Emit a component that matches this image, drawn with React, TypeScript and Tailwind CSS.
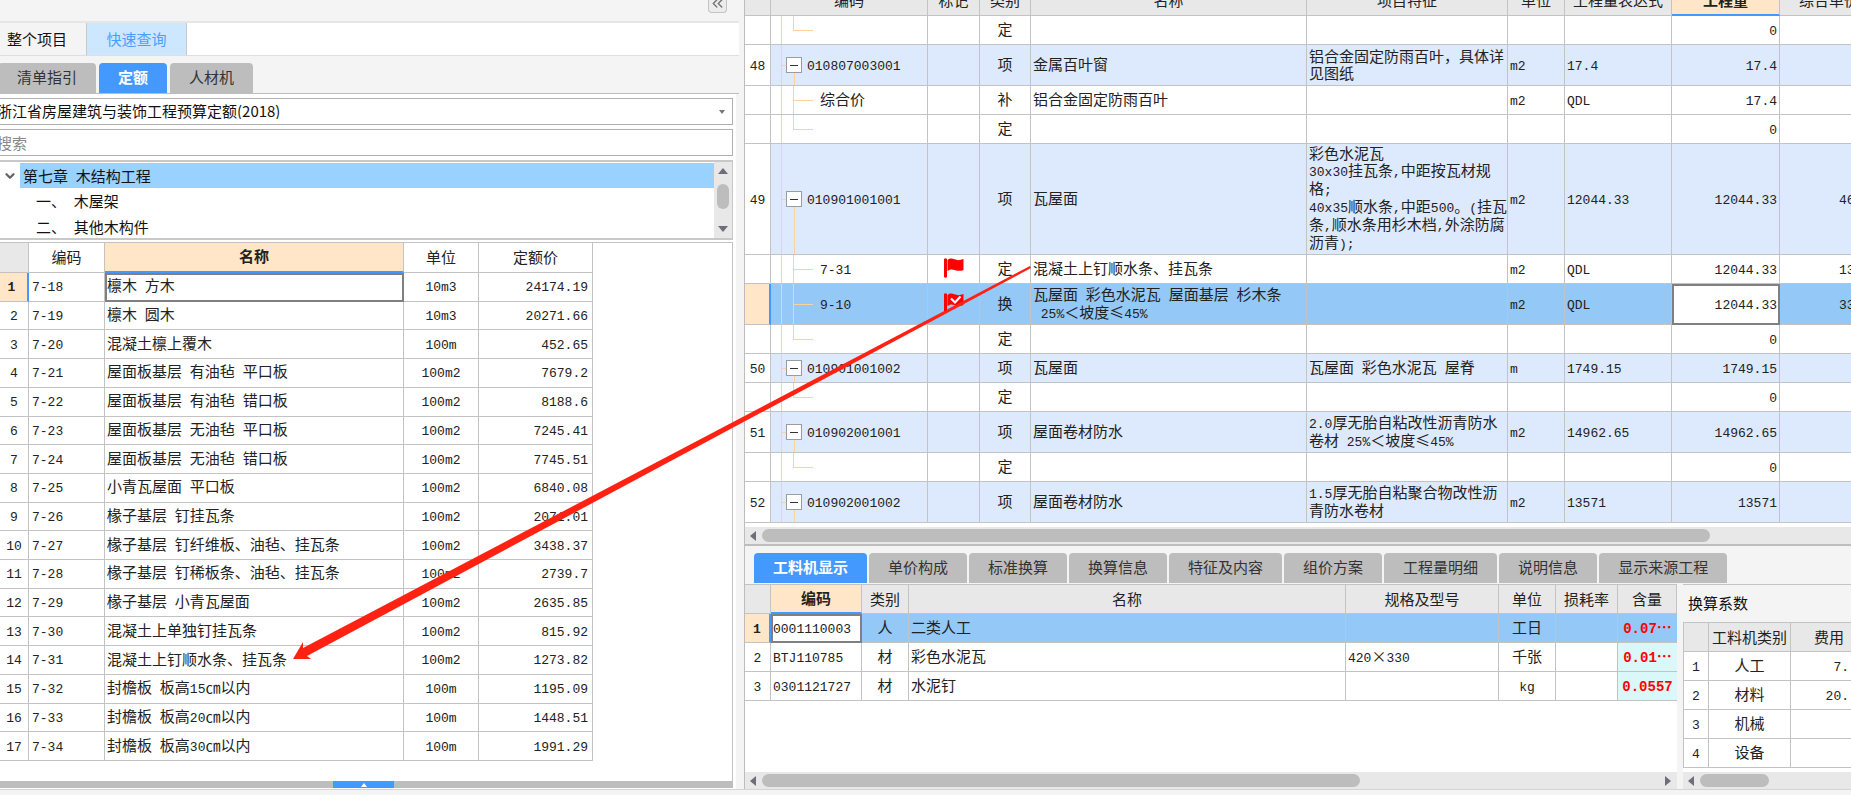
import type { ReactNode } from 'react';
import { ChevronDown, ChevronsLeft } from 'lucide-react';

const quotas = [
  ['7-18', '檩木 方木', '10m3', '24174.19'],
  ['7-19', '檩木 圆木', '10m3', '20271.66'],
  ['7-20', '混凝土檩上覆木', '100m', '452.65'],
  ['7-21', '屋面板基层 有油毡 平口板', '100m2', '7679.2'],
  ['7-22', '屋面板基层 有油毡 错口板', '100m2', '8188.6'],
  ['7-23', '屋面板基层 无油毡 平口板', '100m2', '7245.41'],
  ['7-24', '屋面板基层 无油毡 错口板', '100m2', '7745.51'],
  ['7-25', '小青瓦屋面 平口板', '100m2', '6840.08'],
  ['7-26', '椽子基层 钉挂瓦条', '100m2', '2071.01'],
  ['7-27', '椽子基层 钉纤维板、油毡、挂瓦条', '100m2', '3438.37'],
  ['7-28', '椽子基层 钉稀板条、油毡、挂瓦条', '100m2', '2739.7'],
  ['7-29', '椽子基层 小青瓦屋面', '100m2', '2635.85'],
  ['7-30', '混凝土上单独钉挂瓦条', '100m2', '815.92'],
  ['7-31', '混凝土上钉顺水条、挂瓦条', '100m2', '1273.82'],
  ['7-32', '封檐板 板高15㎝以内', '100m', '1195.09'],
  ['7-33', '封檐板 板高20㎝以内', '100m', '1448.51'],
  ['7-34', '封檐板 板高30㎝以内', '100m', '1991.29'],
];

type Bill = {
  no?: string;
  code?: string;
  kind: string;
  name?: string;
  desc?: string;
  unit?: string;
  expr?: string;
  qty: string;
  price?: string;
  flag?: 'plain' | 'checked';
  size?: 'mid' | 'tall';
  selected?: boolean;
  last?: boolean;
};

const bills: Bill[] = [
  { kind: '定', qty: '0', last: true },
  { no: '48', code: '010807003001', kind: '项', name: '金属百叶窗', desc: '铝合金固定防雨百叶，具体详\n见图纸', unit: 'm2', expr: '17.4', qty: '17.4', size: 'mid' },
  { code: '综合价', kind: '补', name: '铝合金固定防雨百叶', unit: 'm2', expr: 'QDL', qty: '17.4' },
  { kind: '定', qty: '0', last: true },
  {
    no: '49', code: '010901001001', kind: '项', name: '瓦屋面', unit: 'm2', expr: '12044.33', qty: '12044.33', price: '46', size: 'tall',
    desc: '彩色水泥瓦\n30x30挂瓦条,中距按瓦材规\n格;\n40x35顺水条,中距500。(挂瓦\n条,顺水条用杉木档,外涂防腐\n沥青);',
  },
  { code: '7-31', kind: '定', name: '混凝土上钉顺水条、挂瓦条', unit: 'm2', expr: 'QDL', qty: '12044.33', price: '13', flag: 'plain' },
  { code: '9-10', kind: '换', name: '瓦屋面 彩色水泥瓦 屋面基层 杉木条\n 25%＜坡度≤45%', unit: 'm2', expr: 'QDL', qty: '12044.33', price: '33', flag: 'checked', size: 'mid', selected: true },
  { kind: '定', qty: '0', last: true },
  { no: '50', code: '010901001002', kind: '项', name: '瓦屋面', desc: '瓦屋面 彩色水泥瓦 屋脊', unit: 'm', expr: '1749.15', qty: '1749.15' },
  { kind: '定', qty: '0', last: true },
  { no: '51', code: '010902001001', kind: '项', name: '屋面卷材防水', desc: '2.0厚无胎自粘改性沥青防水\n卷材 25%＜坡度≤45%', unit: 'm2', expr: '14962.65', qty: '14962.65', size: 'mid' },
  { kind: '定', qty: '0', last: true },
  { no: '52', code: '010902001002', kind: '项', name: '屋面卷材防水', desc: '1.5厚无胎自粘聚合物改性沥\n青防水卷材', unit: 'm2', expr: '13571', qty: '13571', size: 'mid' },
];

const detailTabs = ['工料机显示', '单价构成', '标准换算', '换算信息', '特征及内容', '组价方案', '工程量明细', '说明信息', '显示来源工程'];

const resources = [
  ['0001110003', '人', '二类人工', '', '工日', '0.07…'],
  ['BTJ110785', '材', '彩色水泥瓦', '420×330', '千张', '0.01…'],
  ['0301121727', '材', '水泥钉', '', 'kg', '0.0557'],
];

const factors = [
  ['人工', '7.'],
  ['材料', '20.'],
  ['机械', ''],
  ['设备', ''],
];

const line = 'border-[#c3c3c3]';
const cell = `border-r border-b ${line} px-[2px] font-normal whitespace-pre`;
const rowHeight = { short: 'h-[29px]', mid: 'h-[41px]', tall: 'h-[111px]' };

// Latin runs are set in a narrower monospace next to the CJK glyphs
function Txt({ children = '', big }: { children?: string; big?: boolean }) {
  return children.split(/([\x20-\x7e]+)/).map((part, i) =>
    i % 2 ? (
      <span key={i} className={`font-['Liberation_Mono',monospace] leading-none ${big ? 'text-sm' : 'text-[13px]'}`}>
        {part}
      </span>
    ) : (
      part
    ),
  );
}

function Cols({ widths }: { widths: string[] }) {
  return (
    <colgroup>
      {widths.map((w, i) => (
        <col key={i} className={w} />
      ))}
    </colgroup>
  );
}

function Arrow({ dir }: { dir: 'up' | 'down' | 'left' | 'right' }) {
  const points = { up: '0,6 5,0 10,6', down: '0,0 10,0 5,6', left: '6,0 6,10 0,5', right: '0,0 6,5 0,10' }[dir];
  const vertical = dir === 'up' || dir === 'down';
  return (
    <svg width={vertical ? 10 : 6} height={vertical ? 6 : 10} className="shrink-0" aria-hidden="true">
      <polygon points={points} fill="#6f6f78" />
    </svg>
  );
}

function HScroll({ thumb, end }: { thumb: string; end?: boolean }) {
  return (
    <div className="flex h-[17px] shrink-0 items-center bg-[#e8e8e8] pr-[6px] pl-[5px]">
      <Arrow dir="left" />
      <div className="flex min-w-0 flex-1 px-[6px]">
        <div className={`h-[13px] rounded-full bg-[#bdbdbd] ${thumb}`} />
      </div>
      {end && <Arrow dir="right" />}
    </div>
  );
}

function Tab({ active, children }: { active?: boolean; children: ReactNode }) {
  return (
    <button
      role="tab"
      aria-selected={!!active}
      className={`h-[30px] shrink-0 rounded-t-sm px-[19px] pb-[3px] text-[15px] leading-[17px] ${active ? 'bg-[#4499ff] font-bold text-white' : 'bg-[#bdbdbd] text-[#333]'}`}>
      {children}
    </button>
  );
}

function Flag({ checked }: { checked?: boolean }) {
  return (
    <svg width="20" height="22" viewBox="0 0 20 22" className="mx-auto block">
      <path d="M0 2q1.500-1.500 3 0v18q-1.500 1.500-3 0z" fill="#f00" />
      <path d="M3.500 3C6 1 8 1.200 10.500 2.300S16 3.500 19.500 2V13c-3 1.300-6 1-9 0s-5-.5-7 1z" fill="#f00" />
      {checked && <path d="M7 6.500l4 4 5.500-6" fill="none" stroke="#fff" strokeWidth="2.200" />}
    </svg>
  );
}

function TreeCell({ row }: { row: Bill }) {
  const tree = 'border-[#fbd29b]';
  return (
    <div className="flex h-full items-center">
      <div className={`w-[11px] shrink-0 self-stretch border-r ${tree}`} />
      {row.no ? (
        <>
          <div className={`w-1 border-t ${tree}`} />
          <div className="flex w-4 flex-col items-center self-stretch">
            <div className="flex-1" />
            <button
              aria-label="折叠"
              className="flex h-4 w-4 items-center justify-center border border-[#9c9c9c] bg-white">
              <span className="h-px w-2 bg-[#333]" />
            </button>
            <div className={`w-0 flex-1 border-l ${tree}`} />
          </div>
          <span className="pb-[3px] pl-[5px]">
            <Txt>{row.code}</Txt>
          </span>
        </>
      ) : (
        <>
          <div className="ml-[11px] flex w-5 flex-col self-stretch">
            <div className={`flex-1 border-b border-l ${tree}`} />
            <div className={`flex-1 ${row.last ? '' : `border-l ${tree}`}`} />
          </div>
          <span className="pb-[3px] pl-[7px]">
            <Txt>{row.code}</Txt>
          </span>
        </>
      )}
    </div>
  );
}

function QuotaPanel() {
  return (
    <section className="flex w-[745px] shrink-0 flex-col border-r border-[#bdbdbd] bg-[#f4f4f4] pr-[5px]">
      <div className="flex h-[23px] shrink-0 items-start justify-end border-b-2 border-[#e6e6e6] pr-3">
        <button aria-label="收起" className="flex h-[13px] w-[19px] items-center justify-center overflow-hidden rounded-b border border-t-0 border-[#c3c3c3] bg-[#ececec] pb-[5px] text-[#777]">
          <ChevronsLeft size={17} className="shrink-0" />
        </button>
      </div>
      <div role="tablist" className="flex h-[33px] shrink-0 border-b border-[#dedede] bg-white">
        <button role="tab" className="w-[87px] border-r border-[#c8c8c8] bg-[#f4f4f4] pr-3 pb-[2px]">
          整个项目
        </button>
        <button role="tab" aria-selected className="w-[100px] border-r border-[#c8c8c8] bg-[#cce7ff] pb-[2px] text-[#4b9eff]">
          快速查询
        </button>
      </div>
      <div className="shrink-0 border-b border-[#bdbdbd] pt-[7px]">
        <div role="tablist" className="-ml-[2px] flex gap-[3px]">
          <Tab>清单指引</Tab>
          <Tab active>定额</Tab>
          <Tab>人材机</Tab>
        </div>
      </div>
      <div className="mr-[3px] flex flex-1 flex-col bg-white pt-1 pr-[3px]">
        <div className="-ml-1 flex flex-col gap-1">
          <div className="grid items-center">
            <select aria-label="定额库" className="col-start-1 row-start-1 h-[27px] w-full appearance-none border border-[#b0b0b0] bg-white pb-[2px] text-[15px]">
              <option>浙江省房屋建筑与装饰工程预算定额(2018)</option>
            </select>
            <svg width="6" height="4" className="col-start-1 row-start-1 mr-2 justify-self-end">
              <polygon points="0,0 6,0 3,4" fill="#777" />
            </svg>
          </div>
          <input aria-label="搜索" placeholder="搜索" className="h-[27px] border border-[#b0b0b0] text-[15px] placeholder:text-[#888]" />
        </div>
        <div className="mt-1 flex h-20 shrink-0 border-y-2 border-r border-[#c8c8c8]">
          <ul className="min-w-0 flex-1 leading-[25px]">
            <li>
              <div className="flex items-center pt-px">
                <ChevronDown size={14} strokeWidth={4} className="mx-[3px] shrink-0 text-[#666]" />
                <span className="flex-1 bg-[#99d1ff] pl-[3px] whitespace-pre">
                  <Txt>第七章 木结构工程</Txt>
                </span>
              </div>
              <ul className="pl-9 whitespace-pre">
                <li className="h-[26px]"><Txt>一、 木屋架</Txt></li>
                <li className="h-6"><Txt>二、 其他木构件</Txt></li>
              </ul>
            </li>
          </ul>
          <div className="flex w-[18px] flex-col items-center bg-[#e8e8e8] py-[6px]">
            <Arrow dir="up" />
            <div className="mt-[10px] mb-auto h-[25px] w-3 rounded-full bg-[#bdbdbd]" />
            <Arrow dir="down" />
          </div>
        </div>
        <div className={`mt-[2px] flex-1 border-t border-r ${line}`}>
          <table className="h-[518px] w-[593px] table-fixed border-separate border-spacing-0 text-[#222] [&_td]:pb-[3px] [&_th]:pb-[3px]">
            <Cols widths={['w-[29px]', 'w-[76px]', 'w-auto', 'w-[75px]', 'w-[114px]']} />
            <thead>
              <tr className="h-[30px]">
                <th className={`${cell} bg-[#e8e8e8]`} />
                <th className={cell}>编码</th>
                <th className="border-r border-b-2 border-r-[#c3c3c3] border-b-[#4499ff] bg-[#ffe6c8] font-bold">名称</th>
                <th className={cell}>单位</th>
                <th className={cell}>定额价</th>
              </tr>
            </thead>
            <tbody>
              {quotas.map(([code, name, unit, price], i) => (
                <tr key={code}>
                  <td className={`text-center ${i ? cell : 'border-r-2 border-b border-r-[#4499ff] border-b-[#c3c3c3] bg-[#ffe6c8] pr-1 font-bold'}`}>
                    <Txt>{`${i + 1}`}</Txt>
                  </td>
                  <td className={`${cell} pl-[3px]`}><Txt>{code}</Txt></td>
                  <td className={`${cell} ${i ? '' : 'outline-2 -outline-offset-2 outline-[#808080]'}`}><Txt>{name}</Txt></td>
                  <td className={`${cell} text-center`}><Txt>{unit}</Txt></td>
                  <td className={`${cell} pr-1 text-right`}><Txt>{price}</Txt></td>
                </tr>
              ))}
            </tbody>
          </table>
        </div>
        <button aria-label="展开" className="mb-px flex h-[7px] shrink-0 bg-[#bdbdbd] pl-[333px]">
          <span className="flex h-full w-[61px] items-center justify-center bg-[#4499ff]">
            <svg width="6" height="4"><polygon points="0,4 3,0 6,4" fill="#fff" /></svg>
          </span>
        </button>
      </div>
    </section>
  );
}

function BillTable() {
  const heads = ['', '编码', '标记', '类别', '名称', '项目特征', '单位', '工程量表达式', '工程量', '综合单价'];
  return (
    <div className="h-[525px] shrink-0 overflow-hidden bg-white">
      {/* scrolled so that the header is half out of view */}
      <table className="-mt-[13px] w-[calc(100%+28px)] table-fixed border-separate border-spacing-0 text-[#222] [&_td]:pb-[3px] [&_th]:pb-[3px]">
        <Cols widths={['w-[26px]', 'w-[157px]', 'w-[52px]', 'w-[51px]', 'w-auto', 'w-[201px]', 'w-[57px]', 'w-[107px]', 'w-[108px]', 'w-[99px]']} />
        <thead>
          <tr className="h-[29px]">
            {heads.map((h, i) => (
              <th key={i} className={h === '工程量' ? 'border-r border-b-2 border-r-[#c3c3c3] border-b-[#4499ff] bg-[#ffe6c8] font-bold' : `${cell} bg-[#e8e8e8]`}>
                {h}
              </th>
            ))}
          </tr>
        </thead>
        <tbody>
          {bills.map((row, i) => {
            const height = rowHeight[row.size ?? 'short'];
            return (
              <tr key={i} className={row.selected ? 'bg-[#93c8f7]' : row.no ? 'bg-[#dde9fd]' : 'bg-white'}>
                <td className={`${height} border-b border-b-[#c3c3c3] text-center ${row.selected ? 'border-r-2 border-r-[#4499ff] bg-[#ffe6c8]' : 'border-r border-r-[#c3c3c3] bg-white'}`}>
                  <Txt>{row.no}</Txt>
                </td>
                <td className={`${height} border-r border-b ${line} p-0 pb-0!`}><TreeCell row={row} /></td>
                <td className={cell}>{row.flag && <Flag checked={row.flag === 'checked'} />}</td>
                <td className={`${cell} text-center`}>{row.kind}</td>
                <td className={cell}><Txt>{row.name}</Txt></td>
                <td className={cell}><Txt>{row.desc}</Txt></td>
                <td className={cell}><Txt>{row.unit}</Txt></td>
                <td className={cell}><Txt>{row.expr}</Txt></td>
                <td className={`${cell} text-right ${row.selected ? 'bg-white outline-2 -outline-offset-2 outline-[#808080]' : ''}`}>
                  <Txt>{row.qty}</Txt>
                </td>
                <td className={`border-r border-b ${line} pl-[59px]`}><Txt>{row.price}</Txt></td>
              </tr>
            );
          })}
        </tbody>
      </table>
    </div>
  );
}

function ResourceTable() {
  return (
    <div className="flex min-w-0 flex-1 flex-col overflow-hidden bg-white">
      <table className={`w-full table-fixed border-separate border-spacing-0 border-t ${line} text-[#222] [&_td]:pb-[3px] [&_th]:pb-[2px]`}>
        <Cols widths={['w-[26px]', 'w-[91px]', 'w-[47px]', 'w-auto', 'w-[153px]', 'w-[57px]', 'w-[62px]', 'w-[59px]']} />
        <thead>
          <tr className="h-[29px]">
            {['', '编码', '类别', '名称', '规格及型号', '单位', '损耗率', '含量'].map((h, i) => (
              <th key={i} className={i === 1 ? 'border-r border-b-2 border-r-[#c3c3c3] border-b-[#4499ff] bg-[#ffe6c8] font-bold' : `${cell} bg-[#e8e8e8]`}>
                {h}
              </th>
            ))}
          </tr>
        </thead>
        <tbody>
          {resources.map(([code, kind, name, spec, unit, amount], i) => (
            <tr key={code} className={`h-[29px] ${i ? 'bg-white' : 'bg-[#93c8f7]'}`}>
              <td className={`text-center ${i ? cell : 'border-r-2 border-b border-r-[#4499ff] border-b-[#c3c3c3] bg-[#ffe6c8] font-bold'}`}>
                <Txt>{`${i + 1}`}</Txt>
              </td>
              <td className={`${cell} ${i ? '' : 'bg-white outline-2 -outline-offset-2 outline-[#808080]'}`}><Txt>{code}</Txt></td>
              <td className={`${cell} text-center`}>{kind}</td>
              <td className={cell}>{name}</td>
              <td className={cell}><Txt>{spec}</Txt></td>
              <td className={`${cell} text-center`}><Txt>{unit}</Txt></td>
              <td className={cell} />
              <td className={`border-b ${line} text-center font-bold text-[#f00] ${i ? 'bg-[#daf8f9]' : ''}`}>
                <Txt big>{amount}</Txt>
              </td>
            </tr>
          ))}
        </tbody>
      </table>
      <div className="flex-1" />
      <HScroll thumb="w-2/3" end />
    </div>
  );
}

function FactorPanel() {
  return (
    <aside className="flex w-[168px] shrink-0 flex-col overflow-hidden bg-white">
      <h2 className={`h-[38px] shrink-0 border-t ${line} bg-[#f4f4f4] pl-[5px] leading-[36px]`}>换算系数</h2>
      <div className="min-h-0 flex-1 overflow-hidden">
        <table className={`w-[185px] table-fixed border-separate border-spacing-0 border-t border-l ${line} text-[#222] [&_td]:pb-[3px] [&_th]:pb-[2px]`}>
          <Cols widths={['w-[25px]', 'w-[82px]', 'w-auto']} />
          <thead>
            <tr className="h-[29px]">
              {['', '工料机类别', '费用'].map((h, i) => (
                <th key={i} className={`${cell} bg-[#e8e8e8]`}>{h}</th>
              ))}
            </tr>
          </thead>
          <tbody>
            {factors.map(([name, value], i) => (
              <tr key={name} className="h-[29px]">
                <td className={`${cell} text-center`}><Txt>{`${i + 1}`}</Txt></td>
                <td className={`${cell} text-center`}>{name}</td>
                <td className={`border-b ${line} pr-[19px] text-right`}><Txt>{value}</Txt></td>
              </tr>
            ))}
          </tbody>
        </table>
      </div>
      <HScroll thumb="w-[69px] shrink-0" />
    </aside>
  );
}

export default function App() {
  return (
    <main className="relative flex h-screen min-h-[795px] flex-col overflow-hidden bg-[#f4f4f4] font-['Noto_Sans_CJK_SC',sans-serif] text-[15px] leading-[17px] text-[#111]">
      <div className="flex min-h-0 flex-1">
        <QuotaPanel />
        <section className="flex min-w-0 flex-1 flex-col">
          <BillTable />
          <div className="shrink-0 border-t-2 border-b-2 border-t-white border-b-[#bdbdbd]">
            <HScroll thumb="w-[88%]" />
          </div>
          <div role="tablist" className="mt-[7px] flex shrink-0 gap-[2px] pl-[9px]">
            {detailTabs.map((t, i) => (
              <Tab key={t} active={i === 0}>{t}</Tab>
            ))}
          </div>
          <div className="mt-px flex min-h-0 flex-1 gap-[6px]">
            <ResourceTable />
            <FactorPanel />
          </div>
        </section>
      </div>
      <footer className="h-[6px] shrink-0 border-t border-[#d4d4d4]" />
      {/* link between the bill row and its quota */}
      <svg width="1040" height="670" className="pointer-events-none absolute top-0 left-0" aria-hidden="true">
        <polygon points="293,659 303,642 303,648 1030,266 1031,268 307,656 311,659" fill="#ff2213" />
      </svg>
    </main>
  );
}
